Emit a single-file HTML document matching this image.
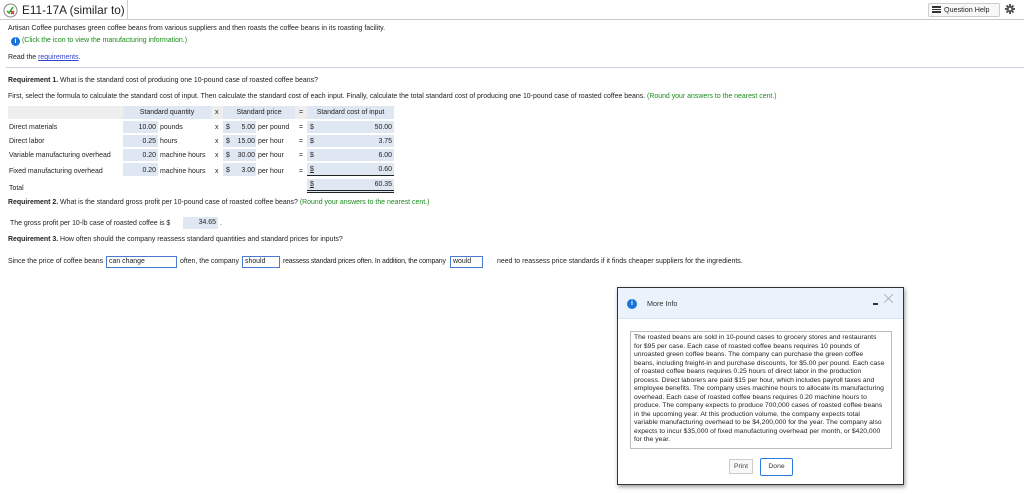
<!DOCTYPE html>
<html><head><style>
*{margin:0;padding:0;box-sizing:border-box}
body{width:1024px;height:494px;background:#fff;font-family:"Liberation Sans",sans-serif;color:#222;position:relative;overflow:hidden;font-size:6.95px}
.a{position:absolute;white-space:nowrap;line-height:8px}
.g{color:#1a8a1a}
.box{position:absolute;background:#dfe7f3}
.hd{position:absolute;background:#dfe7f3;text-align:center;line-height:13px;top:106px;height:13px}
.in{position:absolute;border:1px solid #4a7bd0;height:12px;line-height:10px;padding-left:2px;background:#fff}
</style></head><body>
<div style="position:absolute;left:0;top:19px;width:1024px;height:1px;background:#ccc"></div>
<div style="position:absolute;left:127px;top:0;width:1px;height:19px;background:#ccc"></div>
<svg style="position:absolute;left:3px;top:3px" width="15" height="15" viewBox="0 0 15 15"><circle cx="7.5" cy="7.5" r="6.5" fill="#fff" stroke="#888"/><path d="M4 8 L6 10 L10 4" stroke="#2a2" stroke-width="1.5" fill="none"/><path d="M8 8 L11 11 M11 8 L8 11" stroke="#d22" stroke-width="1.3"/></svg>
<div class="a" style="left:22px;top:3px;font-size:11.8px;line-height:14px;color:#222">E11-17A (similar to)</div>
<div style="position:absolute;left:928px;top:3px;width:72px;height:14px;border:1px solid #ccc;border-radius:2px;background:#f8f8f8"></div>
<div class="a" style="left:932px;top:6px;width:9px;height:7px;border-top:2px solid #333;border-bottom:2px solid #333"></div>
<div class="a" style="left:932px;top:8.5px;width:9px;height:1.5px;background:#333"></div>
<div class="a" style="left:944px;top:6px;font-size:7.2px">Question Help</div>
<svg style="position:absolute;left:1005px;top:4px" width="10" height="10" viewBox="0 0 10 10"><g stroke="#555" stroke-width="2"><path d="M5 0V10M0 5H10M1.5 1.5L8.5 8.5M8.5 1.5L1.5 8.5"/></g><circle cx="5" cy="5" r="3" fill="#555"/><circle cx="5" cy="5" r="1.3" fill="#fff"/></svg>

<div class="a" style="left:8px;top:25px">Artisan Coffee purchases green coffee beans from various suppliers and then roasts the coffee beans in its roasting facility.</div>
<div style="position:absolute;left:11px;top:37px;width:9px;height:9px;border-radius:50%;background:#1a73d9;color:#fff;font-size:7px;font-weight:bold;text-align:center;line-height:9px">i</div>
<div class="a g" style="left:22px;top:37px">(Click the icon to view the manufacturing information.)</div>
<div class="a" style="left:8px;top:54px">Read the <span style="color:#3344cc;text-decoration:underline">requirements</span>.</div>
<div style="position:absolute;left:6px;top:67px;width:1018px;height:1px;background:#ccd"></div>

<div class="a" style="left:8px;top:77px"><b>Requirement 1.</b> What is the standard cost of producing one 10-pound case of roasted coffee beans?</div>
<div class="a" style="left:8px;top:93px">First, select the formula to calculate the standard cost of input. Then calculate the standard cost of each input. Finally, calculate the total standard cost of producing one 10-pound case of roasted coffee beans. <span class="g">(Round your answers to the nearest cent.)</span></div>

<div style="position:absolute;left:8px;top:106px;width:386px;height:13px;background:#eee"></div>
<div class="hd" style="left:123px;width:88px">Standard quantity</div>
<div class="a" style="left:215px;top:109px">x</div>
<div class="hd" style="left:223px;width:72px">Standard price</div>
<div class="a" style="left:299px;top:109px">=</div>
<div class="hd" style="left:307px;width:87px">Standard cost of input</div>

<div class="a" style="left:9px;top:124px">Direct materials</div>
<div class="box" style="left:123px;top:121px;width:35px;height:12px"></div><div class="a" style="left:123px;top:124px;width:33px;text-align:right">10.00</div>
<div class="a" style="left:160px;top:124px">pounds</div>
<div class="a" style="left:215px;top:124px">x</div>
<div class="box" style="left:223px;top:121px;width:33px;height:12px"></div><div class="a" style="left:226px;top:124px">$</div><div class="a" style="left:223px;top:124px;width:32px;text-align:right">5.00</div>
<div class="a" style="left:258px;top:124px">per pound</div>
<div class="a" style="left:299px;top:124px">=</div>
<div class="box" style="left:307px;top:121px;width:87px;height:12px"></div><div class="a" style="left:310px;top:124px">$</div><div class="a" style="left:307px;top:124px;width:85px;text-align:right">50.00</div>

<div class="a" style="left:9px;top:138px">Direct labor</div>
<div class="box" style="left:123px;top:135px;width:35px;height:12px"></div><div class="a" style="left:123px;top:138px;width:33px;text-align:right">0.25</div>
<div class="a" style="left:160px;top:138px">hours</div>
<div class="a" style="left:215px;top:138px">x</div>
<div class="box" style="left:223px;top:135px;width:33px;height:12px"></div><div class="a" style="left:226px;top:138px">$</div><div class="a" style="left:223px;top:138px;width:32px;text-align:right">15.00</div>
<div class="a" style="left:258px;top:138px">per hour</div>
<div class="a" style="left:299px;top:138px">=</div>
<div class="box" style="left:307px;top:135px;width:87px;height:12px"></div><div class="a" style="left:310px;top:138px">$</div><div class="a" style="left:307px;top:138px;width:85px;text-align:right">3.75</div>

<div class="a" style="left:9px;top:152px">Variable manufacturing overhead</div>
<div class="box" style="left:123px;top:149px;width:35px;height:12px"></div><div class="a" style="left:123px;top:152px;width:33px;text-align:right">0.20</div>
<div class="a" style="left:160px;top:152px">machine hours</div>
<div class="a" style="left:215px;top:152px">x</div>
<div class="box" style="left:223px;top:149px;width:33px;height:12px"></div><div class="a" style="left:226px;top:152px">$</div><div class="a" style="left:223px;top:152px;width:32px;text-align:right">30.00</div>
<div class="a" style="left:258px;top:152px">per hour</div>
<div class="a" style="left:299px;top:152px">=</div>
<div class="box" style="left:307px;top:149px;width:87px;height:12px"></div><div class="a" style="left:310px;top:152px">$</div><div class="a" style="left:307px;top:152px;width:85px;text-align:right">6.00</div>

<div class="a" style="left:9px;top:168px">Fixed manufacturing overhead</div>
<div class="box" style="left:123px;top:163px;width:35px;height:13px"></div><div class="a" style="left:123px;top:167px;width:33px;text-align:right">0.20</div>
<div class="a" style="left:160px;top:168px">machine hours</div>
<div class="a" style="left:215px;top:168px">x</div>
<div class="box" style="left:223px;top:163px;width:33px;height:13px"></div><div class="a" style="left:226px;top:167px">$</div><div class="a" style="left:223px;top:167px;width:32px;text-align:right">3.00</div>
<div class="a" style="left:258px;top:168px">per hour</div>
<div class="a" style="left:299px;top:168px">=</div>
<div class="box" style="left:307px;top:163px;width:87px;height:13px;border-bottom:1px solid #222"></div><div class="a" style="left:310px;top:166px;text-decoration:underline">$</div><div class="a" style="left:307px;top:166px;width:85px;text-align:right">0.60</div>

<div class="a" style="left:9px;top:185px">Total</div>
<div class="box" style="left:307px;top:179px;width:87px;height:14px;border-bottom:3px double #222"></div><div class="a" style="left:310px;top:181px;text-decoration:underline">$</div><div class="a" style="left:307px;top:181px;width:85px;text-align:right">60.35</div>

<div class="a" style="left:8px;top:199px"><b>Requirement 2.</b> What is the standard gross profit per 10-pound case of roasted coffee beans? <span class="g">(Round your answers to the nearest cent.)</span></div>
<div class="a" style="left:10px;top:220px">The gross profit per 10-lb case of roasted coffee is $</div>
<div class="box" style="left:183px;top:217px;width:35px;height:12px"></div><div class="a" style="left:183px;top:219px;width:33px;text-align:right">34.65</div>
<div class="a" style="left:220px;top:220px">.</div>

<div class="a" style="left:8px;top:236px"><b>Requirement 3.</b> How often should the company reassess standard quantities and standard prices for inputs?</div>
<div class="a" style="left:8px;top:258px">Since the price of coffee beans</div>
<div class="in" style="left:106px;top:256px;width:71px">can change</div>
<div class="a" style="left:180px;top:258px">often, the company</div>
<div class="in" style="left:242px;top:256px;width:38px">should</div>
<div class="a" style="left:283px;top:258px;letter-spacing:-0.2px">reassess standard prices often. In addition, the company</div>
<div class="in" style="left:450px;top:256px;width:33px">would</div>
<div class="a" style="left:497px;top:258px">need to reassess price standards if it finds cheaper suppliers for the ingredients.</div>

<div style="position:absolute;left:617px;top:287px;width:287px;height:198px;border:1px solid #333;background:#fff;box-shadow:1px 2px 4px rgba(0,0,0,.4)">
<div style="position:absolute;left:0;top:0;width:285px;height:31px;background:#eaf3fc;border-bottom:1px solid #d8e4f0"></div>
<div style="position:absolute;left:9px;top:11px;width:10px;height:10px;border-radius:50%;background:#1a73d9;color:#fff;font-size:7px;font-weight:bold;text-align:center;line-height:10px">i</div>
<div class="a" style="left:29px;top:12px;font-size:7.2px;color:#333">More Info</div>
<div style="position:absolute;left:255px;top:15px;width:5px;height:2px;background:#333"></div>
<svg style="position:absolute;left:266px;top:6px" width="9" height="9" viewBox="0 0 9 9"><path d="M0 0L9 9M9 0L0 9" stroke="#aaa" stroke-width="0.8"/></svg>
<div style="position:absolute;left:12px;top:43px;width:262px;height:118px;border:1px solid #bbb;padding:2px 3px;font-size:6.75px;letter-spacing:0.03px;line-height:8.5px;color:#222;white-space:nowrap;overflow:hidden">The roasted beans are sold in 10-pound cases to grocery stores and restaurants<br>for $95 per case. Each case of roasted coffee beans requires 10 pounds of<br>unroasted green coffee beans. The company can purchase the green coffee<br>beans, including freight-in and purchase discounts, for $5.00 per pound. Each case<br>of roasted coffee beans requires 0.25 hours of direct labor in the production<br>process. Direct laborers are paid $15 per hour, which includes payroll taxes and<br>employee benefits. The company uses machine hours to allocate its manufacturing<br>overhead. Each case of roasted coffee beans requires 0.20 machine hours to<br>produce. The company expects to produce 700,000 cases of roasted coffee beans<br>in the upcoming year. At this production volume, the company expects total<br>variable manufacturing overhead to be $4,200,000 for the year. The company also<br>expects to incur $35,000 of fixed manufacturing overhead per month, or $420,000<br>for the year.</div>
<div style="position:absolute;left:111px;top:171px;width:24px;height:15px;border:1px solid #ccc;background:#f8f8f8;text-align:center;line-height:13px;font-size:6.8px;color:#444">Print</div>
<div style="position:absolute;left:142px;top:170px;width:33px;height:18px;border:1.5px solid #2a7ae2;border-radius:2px;text-align:center;line-height:15px;font-size:6.8px;color:#333">Done</div>
</div>
</body></html>
